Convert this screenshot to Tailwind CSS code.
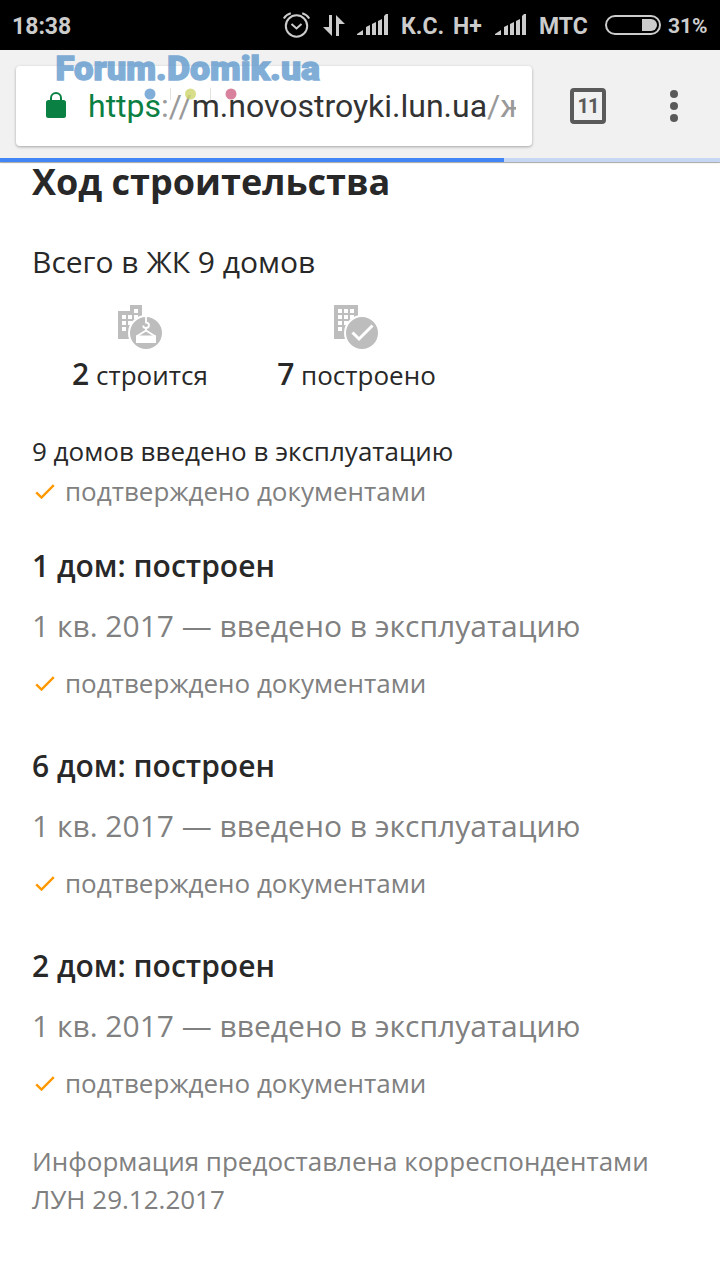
<!DOCTYPE html>
<html lang="ru">
<head>
<meta charset="utf-8">
<title>Ход строительства</title>
<script src="https://cdn.jsdelivr.net/npm/@tailwindcss/browser@4"></script>
</head>
<body class="h-[1280px] w-[720px] overflow-hidden bg-white font-['Open_Sans',sans-serif] text-[#282828]">
<svg class="hidden">
  <symbol id="signal" viewBox="0 0 32 22"><path fill="#ccc" d="M0 21v-1l6-4v5zM9 21v-8l4-2v10zM15 21v-11l4-2v13zM21 21V7l4-2v16zM27 21V2l2-2h2v21z"/></symbol>
  <symbol id="tick" viewBox="0 0 20 16"><path d="M1.2 9.300l5.300 5.200L18.800 2.200" fill="none" stroke="#ff9800" stroke-width="2.400"/></symbol>
</svg>

<div class="flex h-[50px] items-center bg-black pl-3 font-[Roboto,sans-serif] text-[23px] font-bold whitespace-nowrap text-[#ccc]">
  <span class="w-[270px] pt-[4px]">18:38</span>
  <svg class="h-[28px] w-[30px]" viewBox="0 0 30 28" fill="none" stroke="#ccc" stroke-width="2"><circle cx="14.5" cy="15" r="10.7"/><path d="M9.5 13l5 4.5 5-4.5M1.8 7.5Q4 3.5 8.8 2.2M20.2 2.2Q25 3.5 27.2 7.5"/></svg>
  <svg class="mt-px ml-[11px] h-[22px] w-[23px]" viewBox="0 0 23 22" fill="#ccc"><path d="M6 0h3v21L0 12h6zM13 0l9 9h-6v12h-3z"/></svg>
  <svg class="ml-[11px] h-[22px] w-[32px]"><use href="#signal"/></svg>
  <span class="ml-[12px] w-[52px] pt-[4px]">К.С.</span>
  <span class="w-[42px] pt-[4px]">H+</span>
  <svg class="h-[22px] w-[32px]"><use href="#signal"/></svg>
  <span class="ml-[12px] w-[66px] pt-[4px]">МТС</span>
  <svg class="h-[20px] w-[56px]" viewBox="0 0 56 20"><rect x="1" y="1" width="54" height="18" rx="9" fill="none" stroke="#ccc" stroke-width="2"/><path d="M37 4h9a6 6 0 0 1 0 12h-9z" fill="#ccc"/></svg>
  <span class="ml-[7px] pt-[4px] text-[21px]">31%</span>
</div>

<div class="relative h-[108px] bg-[#f1f1f1]">
  <div class="flex px-4 pt-4">
    <div class="flex h-[80px] w-[516px] items-center rounded-[4px] bg-white pl-[30px] shadow-[0_1px_3px_rgba(0,0,0,.32)]">
      <svg class="-mt-[2px] h-[26px] w-[20px]" viewBox="0 0 20 26"><rect y="8" width="20" height="18" rx="2.5" fill="#0b8043"/><path d="M5 9V6a5 5 0 0 1 10 0v3" fill="none" stroke="#0b8043" stroke-width="2"/></svg>
      <div class="ml-[22px] w-[428px] overflow-hidden font-[Roboto,sans-serif] text-[32px] leading-[44px] whitespace-nowrap text-[#333]"><span class="text-[#0b8043]">https</span><span class="text-[#999]">://</span>m.novostroyki.lun.ua<span class="text-[#999]">/ж</span></div>
    </div>
    <div class="mt-[22px] ml-[38px] flex h-[36px] w-[36px] items-center justify-center rounded-[4px] border-4 border-[#5a5a5a] font-[Roboto,sans-serif] text-[20px] font-bold tracking-[-1px] text-[#5a5a5a]">11</div>
    <svg class="mt-[24px] ml-[64px] h-[32px] w-[8px]" viewBox="0 0 8 32" fill="#5a5a5a"><circle cx="4" cy="4" r="4"/><circle cx="4" cy="16" r="4"/><circle cx="4" cy="28" r="4"/></svg>
  </div>
  <svg class="absolute top-0 left-[50px] h-[54px] w-[280px]" viewBox="0 0 280 54">
    <g font-family="Roboto, sans-serif" font-weight="900" font-size="34" fill="#629ace" stroke="#629ace" stroke-width="1.300" opacity=".8">
      <text x="5.500" y="30" textLength="111" lengthAdjust="spacingAndGlyphs">Forum.</text>
      <text x="117" y="30" textLength="153" lengthAdjust="spacingAndGlyphs">Domik.ua</text>
    </g>
    <path d="M120.500 38v12M160.500 38v12" stroke="#e4e2dc"/>
    <circle cx="100" cy="44" r="5.500" fill="#629ace" fill-opacity=".8"/><circle cx="140.500" cy="44" r="5.500" fill="#cdd56c" fill-opacity=".8"/><circle cx="181" cy="44" r="5.500" fill="#cf6384" fill-opacity=".8"/>
  </svg>
</div>
<div class="relative flex h-1 bg-[#c6d7f3] shadow-[0_1px_1px_rgba(0,0,0,.35)]"><div class="w-[504px] bg-[#4285f4]"></div></div>

<main class="px-8 whitespace-nowrap">
  <h1 class="text-[36px] leading-[40px] font-bold">Ход строительства</h1>
  <p class="mt-[40px] text-[30px] leading-[40px]">Всего в ЖК 9 домов</p>
  <div class="mt-[23px] flex">
    <div class="flex w-[216px] flex-col items-center">
      <svg class="h-[44px] w-[44px]" viewBox="0 0 44 44"><path fill="#bdbdbd" d="M0 6h12V0h12v34H0z"/><path fill="#fff" d="M16 4h4v4h-4zM4 10h4v4H4zM10 10h4v4h-4zM16 10h4v4h-4zM4 16h4v4H4zM10 16h4v4h-4zM4 22h4v4H4z"/><circle cx="28" cy="28" r="17" fill="#bdbdbd" stroke="#fff" stroke-width="2"/><path d="M28 11v6.500q3 .5 3 2.500c0 2-1.500 3-3 3s-2.800-.8-2.800-2.600M28 23v3M28 25.500l-9.500 6M28 25.500l9.500 6" fill="none" stroke="#fff" stroke-width="1.800"/><path fill="#fff" d="M18 30.500h20V38H18z"/></svg>
      <p class="mt-[5px] text-[26px] leading-[40px]"><span class="text-[30px] font-semibold">2</span> строится</p>
    </div>
    <div class="flex w-[216px] flex-col items-center">
      <svg class="h-[44px] w-[44px]" viewBox="0 0 44 44"><path fill="#bdbdbd" d="M0 0h24v34H0z"/><path fill="#fff" d="M4 4h4v4H4zM10 4h4v4h-4zM16 4h4v4h-4zM4 10h4v4H4zM10 10h4v4h-4zM16 10h4v4h-4zM4 16h4v4H4zM10 16h4v4h-4zM4 22h4v4H4z"/><circle cx="28" cy="28" r="17" fill="#bdbdbd" stroke="#fff" stroke-width="2"/><path d="M18.500 27.500l6.500 6.500 13.500-13.500" fill="none" stroke="#fff" stroke-width="3"/></svg>
      <p class="mt-[5px] ml-[1px] text-[26px] leading-[40px]"><span class="text-[30px] font-semibold">7</span> построено</p>
    </div>
  </div>
  <p class="mt-[36px] text-[26px] leading-[40px]">9 домов введено в эксплуатацию</p>
  <p class="flex items-center text-[26px] leading-[40px] text-[#808080]"><svg class="mr-[10px] ml-[3px] h-[16px] w-[20px]"><use href="#tick"/></svg>подтверждено документами</p>

  <section class="mt-[35px] h-[200px]">
    <h2 class="text-[30px] leading-[40px] font-semibold">1 дом: построен</h2>
    <p class="mt-[20px] text-[30px] leading-[40px] text-[#808080]">1 кв. 2017 — введено в эксплуатацию</p>
    <p class="mt-[17px] flex items-center text-[26px] leading-[40px] text-[#808080]"><svg class="mr-[10px] ml-[3px] h-[16px] w-[20px]"><use href="#tick"/></svg>подтверждено документами</p>
  </section>
  <section class="h-[200px]">
    <h2 class="text-[30px] leading-[40px] font-semibold">6 дом: построен</h2>
    <p class="mt-[20px] text-[30px] leading-[40px] text-[#808080]">1 кв. 2017 — введено в эксплуатацию</p>
    <p class="mt-[17px] flex items-center text-[26px] leading-[40px] text-[#808080]"><svg class="mr-[10px] ml-[3px] h-[16px] w-[20px]"><use href="#tick"/></svg>подтверждено документами</p>
  </section>
  <section class="h-[196px]">
    <h2 class="text-[30px] leading-[40px] font-semibold">2 дом: построен</h2>
    <p class="mt-[20px] text-[30px] leading-[40px] text-[#808080]">1 кв. 2017 — введено в эксплуатацию</p>
    <p class="mt-[17px] flex items-center text-[26px] leading-[40px] text-[#808080]"><svg class="mr-[10px] ml-[3px] h-[16px] w-[20px]"><use href="#tick"/></svg>подтверждено документами</p>
  </section>
  <p class="text-[26px] leading-[38px] text-[#808080]">Информация предоставлена корреспондентами<br>ЛУН 29.12.2017</p>
</main>
</body>
</html>
